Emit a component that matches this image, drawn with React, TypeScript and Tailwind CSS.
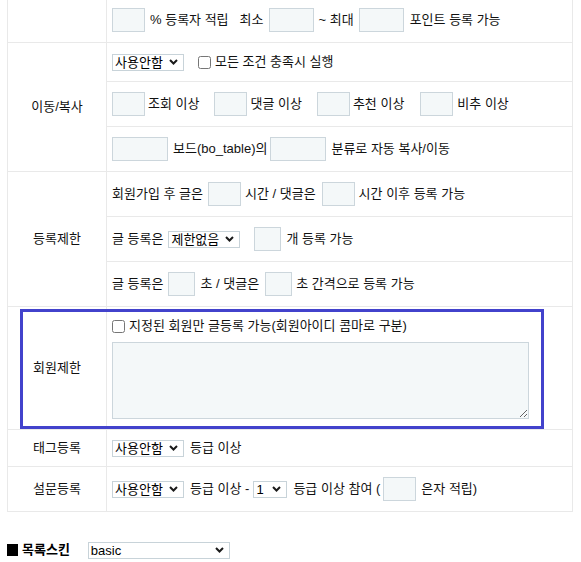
import React from "react";

function Inp({ w, className = "" }: { w: string; className?: string }) {
  return (
    <input
      type="text"
      className={`h-[24px] shrink-0 border border-[#ccd6dc] bg-[#f4f8f9] outline-none ${w} ${className}`}
    />
  );
}

function Sel({ w, value, className = "" }: { w: string; value: string; className?: string }) {
  return (
    <span className={`relative inline-flex shrink-0 ${className}`}>
      <select
        defaultValue={value}
        className={`h-[17px] appearance-none rounded-none border border-[#c8d3d9] bg-white pl-[2px] text-[13px] leading-[15px] text-black outline-none ${w}`}
      >
        <option>{value}</option>
      </select>
      <svg
        className="pointer-events-none absolute right-[6px] top-[5px]"
        width="9"
        height="6"
        viewBox="0 0 9 6"
      >
        <path d="M1 1l3.5 3.5L8 1" stroke="#1a1a1a" strokeWidth="2" fill="none" />
      </svg>
    </span>
  );
}

function T({ children, className = "" }: { children: React.ReactNode; className?: string }) {
  return <span className={`shrink-0 whitespace-pre leading-[16px] ${className}`}>{children}</span>;
}

function Check({ className = "" }: { className?: string }) {
  return <input type="checkbox" className={`m-0 h-[13px] w-[13px] shrink-0 ${className}`} />;
}

function Row({ h, last, children }: { h: string; last?: boolean; children: React.ReactNode }) {
  return (
    <div className={`flex items-center pl-[5px] ${h} ${last ? "" : "border-b border-[#e9e9e9]"}`}>
      {children}
    </div>
  );
}

function Section({
  label,
  children,
  className = "",
}: {
  label: string;
  children: React.ReactNode;
  className?: string;
}) {
  return (
    <div className={`flex border-b border-[#e9e9e9] ${className}`}>
      <div className="flex w-[99px] shrink-0 items-center justify-center border-r border-[#e9e9e9]">
        <span className="leading-[16px]">{label}</span>
      </div>
      <div className="flex min-w-0 flex-1 flex-col">{children}</div>
    </div>
  );
}

export default function App() {
  return (
    <div className="min-h-[562px] w-[581px] bg-white font-['Liberation_Sans','Noto_Sans_CJK_KR',sans-serif] text-[13px] text-[#111]">
      <div className="ml-[7px] w-[566px] border-x border-[#e9e9e9]">
        {/* 포인트 (상단 잘림) */}
        <Section label="">
          <div className="flex h-[42px] items-start pl-[5px] pt-[8px]">
            <Inp w="w-[33px]" />
            <T className="ml-[5px] mt-[4px]">% 등록자 적립</T>
            <T className="ml-[11px] mt-[4px]">최소</T>
            <Inp w="w-[45px]" className="ml-[5px]" />
            <T className="ml-[5px] mt-[4px]">~ 최대</T>
            <Inp w="w-[45px]" className="ml-[5px]" />
            <T className="ml-[6px] mt-[4px]">포인트 등록 가능</T>
          </div>
        </Section>

        {/* 이동/복사 */}
        <Section label="이동/복사">
          <Row h="h-[39px]">
            <Sel w="w-[72px]" value="사용안함" />
            <Check className="ml-[14px]" />
            <T className="ml-[4px]">모든 조건 충족시 실행</T>
          </Row>
          <Row h="h-[45px]">
            <Inp w="w-[33px]" />
            <T className="ml-[3px]">조회 이상</T>
            <Inp w="w-[33px]" className="ml-[15px]" />
            <T className="ml-[3px]">댓글 이상</T>
            <Inp w="w-[33px]" className="ml-[15px]" />
            <T className="ml-[3px]">추천 이상</T>
            <Inp w="w-[33px]" className="ml-[16px]" />
            <T className="ml-[4px]">비추 이상</T>
          </Row>
          <Row h="h-[44px]" last>
            <Inp w="w-[56px]" />
            <T className="ml-[5px]">보드(bo_table)의</T>
            <Inp w="w-[56px]" className="ml-[3px]" />
            <T className="ml-[5px]">분류로 자동 복사/이동</T>
          </Row>
        </Section>

        {/* 등록제한 */}
        <Section label="등록제한">
          <Row h="h-[45px]">
            <T>회원가입 후 글은</T>
            <Inp w="w-[33px]" className="ml-[5px]" />
            <T className="ml-[4px]">시간 / 댓글은</T>
            <Inp w="w-[33px]" className="ml-[6px]" />
            <T className="ml-[4px]">시간 이후 등록 가능</T>
          </Row>
          <Row h="h-[45px]">
            <T>글 등록은</T>
            <Sel w="w-[72px]" value="제한없음" className="ml-[5px]" />
            <Inp w="w-[27px]" className="ml-[14px]" />
            <T className="ml-[5px]">개 등록 가능</T>
          </Row>
          <Row h="h-[44px]" last>
            <T>글 등록은</T>
            <Inp w="w-[27px]" className="ml-[5px]" />
            <T className="ml-[5px]">초 / 댓글은</T>
            <Inp w="w-[27px]" className="ml-[6px]" />
            <T className="ml-[4px]">초 간격으로 등록 가능</T>
          </Row>
        </Section>

        {/* 회원제한 (강조 테두리) */}
        <Section label="회원제한" className="relative">
          <div className="flex h-[122px] flex-col pl-[5px] pt-[12px]">
            <div className="flex h-[14px] items-center">
              <Check />
              <T className="ml-[4px]">지정된 회원만 글등록 가능(회원아이디 콤마로 구분)</T>
            </div>
            <textarea className="mt-[9px] h-[77px] w-[417px] border border-[#ccd6dc] bg-[#f4f8f9] outline-none" />
          </div>
          <div className="pointer-events-none absolute left-[12px] top-[2px] h-[120px] w-[524px] border-[3px] border-[#4242cc]" />
        </Section>

        {/* 태그등록 */}
        <Section label="태그등록">
          <Row h="h-[36px]" last>
            <Sel w="w-[72px]" value="사용안함" />
            <T className="ml-[6px]">등급 이상</T>
          </Row>
        </Section>

        {/* 설문등록 */}
        <Section label="설문등록">
          <Row h="h-[44px]" last>
            <Sel w="w-[72px]" value="사용안함" />
            <T className="ml-[6px]">등급 이상 -</T>
            <Sel w="w-[34px]" value="1" className="ml-[4px]" />
            <T className="ml-[6px]">등급 이상 참여 (</T>
            <Inp w="w-[33px]" className="ml-[3px]" />
            <T className="ml-[5px]">은자 적립)</T>
          </Row>
        </Section>
      </div>

      {/* 목록스킨 */}
      <div className="ml-[7px] mt-[29px] flex h-[18px] items-center">
        <span className="inline-block h-[12px] w-[11px] bg-black" />
        <span className="ml-[4px] text-[13px] font-bold leading-[16px] text-black">목록스킨</span>
        <Sel w="w-[142px]" value="basic" className="ml-[18px]" />
      </div>
    </div>
  );
}
